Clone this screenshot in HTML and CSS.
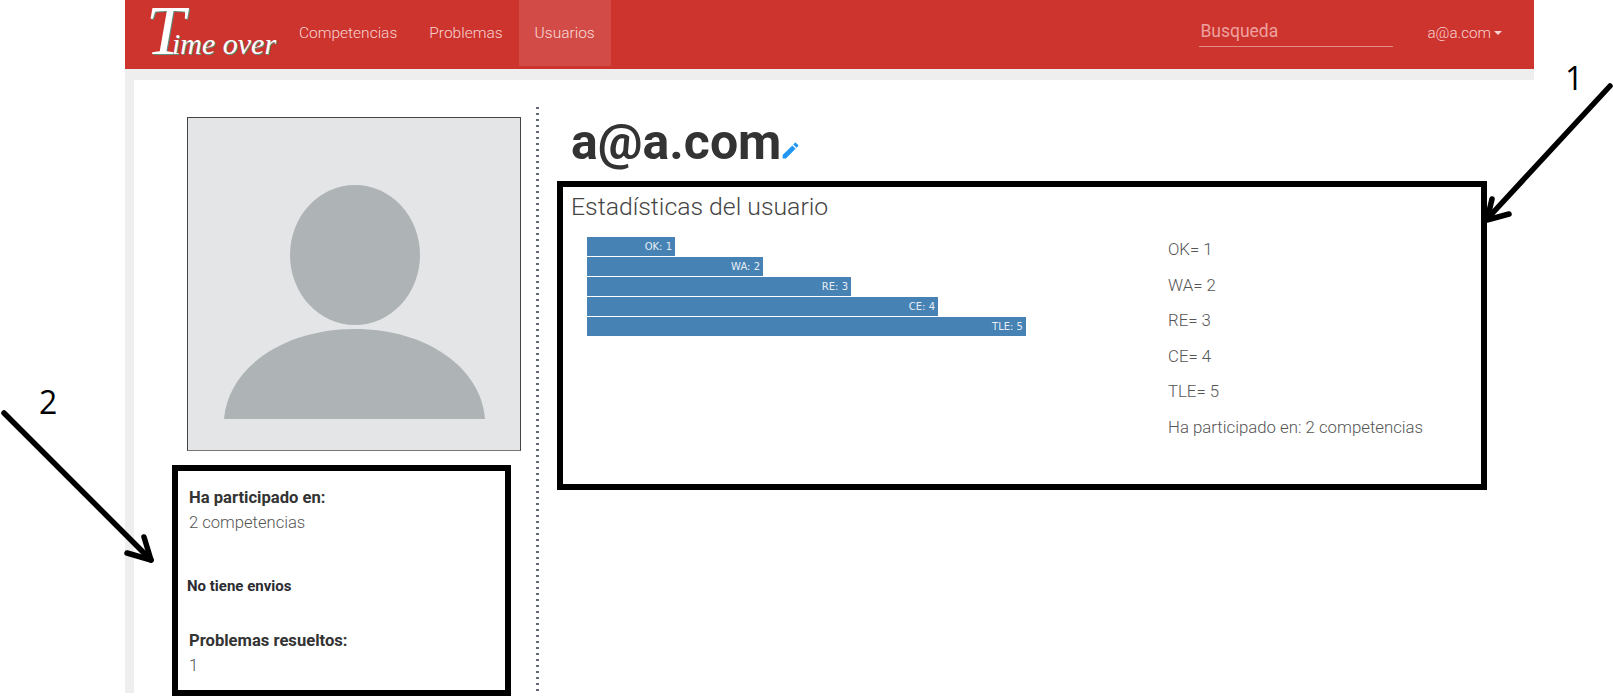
FILE: index.html
```html
<!DOCTYPE html>
<html lang="es">
<head>
    <meta charset="UTF-8">
    <meta name="viewport" content="width=device-width, initial-scale=1.0">
    <title>Time over - Usuario</title>
    <link rel="stylesheet" href="styles.css">
</head>
<body>

<div class="shell">
    <header class="navbar">
        <div class="brand"><a class="brand-text">Time over</a></div>
        <nav class="nav-links">
            <a>Competencias</a>
            <a>Problemas</a>
            <a class="active">Usuarios</a>
        </nav>
        <div class="search">Busqueda</div>
        <a class="user-menu">a@a.com<span class="caret"></span></a>
    </header>

    <main class="page">
        <div class="panel">
            <aside class="side">
                <div class="photo">
                    <svg viewBox="0 0 332 332" width="332" height="332">
                        <ellipse cx="167" cy="137" rx="65" ry="70" fill="#aeb3b6"/>
                        <path d="M36 301 C40 250 95 211 167 211 C239 211 293 250 297 301 Z" fill="#aeb3b6"/>
                    </svg>
                </div>
                <div class="summary">
                    <div class="summary-group">
                        <strong>Ha participado en:</strong>
                        <span>2 competencias</span>
                    </div>
                    <div class="no-envios">No tiene envios</div>
                    <div class="summary-group">
                        <strong>Problemas resueltos:</strong>
                        <span>1</span>
                    </div>
                </div>
            </aside>

            <section class="content">
                <h1 class="user-title">a@a.com<svg class="edit-icon" viewBox="0 0 24 24" width="21" height="21"><path d="M3 17.25V21h3.75L17.81 9.94l-3.75-3.75L3 17.25zM20.71 7.04c.39-.39.39-1.02 0-1.41l-2.34-2.34c-.39-.39-1.02-.39-1.41 0l-1.83 1.83 3.75 3.75 1.83-1.83z"/></svg></h1>

                <div class="stats">
                    <h2>Estadísticas del usuario</h2>
                    <div class="stats-body">
                        <div class="chart">
                            <div class="bar" style="width: 88px">OK: 1</div>
                            <div class="bar" style="width: 176px">WA: 2</div>
                            <div class="bar" style="width: 264px">RE: 3</div>
                            <div class="bar" style="width: 351px">CE: 4</div>
                            <div class="bar" style="width: 439px">TLE: 5</div>
                        </div>
                        <ul class="stats-list">
                            <li>OK= 1</li>
                            <li>WA= 2</li>
                            <li>RE= 3</li>
                            <li>CE= 4</li>
                            <li>TLE= 5</li>
                            <li>Ha participado en: 2 competencias</li>
                        </ul>
                    </div>
                </div>
            </section>
        </div>
    </main>
</div>

<!-- Annotations drawn over the screenshot -->
<span class="mark mark-1">1</span>
<span class="mark mark-2">2</span>
<svg class="arrows" width="1613" height="696" viewBox="0 0 1613 696">
    <g fill="none" stroke="#000" stroke-width="5.5" stroke-linecap="round" stroke-linejoin="round">
        <path d="M1610 86 L1488 218"/>
        <path d="M1492 199 L1487 220 L1509 214"/>
        <path d="M4 413 L151 560"/>
        <path d="M144 537 L151 560 L127 553"/>
    </g>
</svg>

</body>
</html>
```

FILE: styles.css
```css
html, body {
    margin: 0;
    height: 696px;
    overflow: hidden;
    background: #fff;
}
body {
    position: relative;
    font-family: Roboto, "Liberation Sans", sans-serif;
    color: #555;
}
.shell {
    width: 1409px;
    height: 693px;
    margin-left: 125px;
    display: flex;
    flex-direction: column;
}

/* navbar */
.navbar {
    height: 69px;
    flex: none;
    background: #cd342e;
    display: flex;
    align-items: flex-start;
}
.brand {
    width: 158px;
    height: 66px;
    flex: none;
    padding-left: 21px;
    box-sizing: border-box;
}
.brand-text {
    display: inline-block;
    line-height: 62px;
    color: #fff;
    font-family: "Liberation Serif", serif;
    font-style: italic;
    font-size: 30px;
    white-space: nowrap;
    text-shadow: 1px 1px 0 #5f8f80;
}
.brand-text::first-letter {
    font-size: 70px;
    margin-right: -13px;
}
.nav-links {
    display: flex;
}
.nav-links a {
    height: 66px;
    line-height: 66px;
    padding: 0 16px;
    font-size: 15.5px;
    font-weight: 300;
    color: #f8d3d1;
}
.nav-links a.active {
    background: #d34b46;
    color: #f8dddc;
}
.search {
    margin-left: auto;
    width: 194px;
    height: 47px;
    box-sizing: border-box;
    padding: 21px 0 0 1px;
    line-height: 20px;
    font-size: 17.5px;
    color: #eda19e;
    border-bottom: 1px solid #e28d89;
}
.user-menu {
    margin: 0 32px 0 34px;
    line-height: 66px;
    font-size: 15.2px;
    font-weight: 300;
    color: #f8d3d1;
    display: flex;
    align-items: center;
}
.caret {
    margin-left: 3px;
    border-left: 4px solid transparent;
    border-right: 4px solid transparent;
    border-top: 4px solid #f8d3d1;
}

/* page */
.page {
    flex: 1;
    background: #eee;
    padding: 11px 0 0 9px;
    min-height: 0;
}
.panel {
    height: 100%;
    background: #fff;
    padding-top: 25px;
    box-sizing: border-box;
    display: flex;
}
.side {
    width: 405px;
    flex: none;
    padding-top: 12px;
    box-sizing: border-box;
    background: radial-gradient(circle, #5f6673 1.1px, transparent 1.5px) right top / 3px 6px repeat-y;
}
.photo {
    width: 332px;
    height: 332px;
    margin-left: 53px;
    background: #e4e5e7;
    border: 1px solid #444;
    border-bottom-color: #777;
}
.photo svg {
    display: block;
}
.summary {
    width: 339px;
    height: 231px;
    margin: 14px 0 0 38px;
    border: 6px solid #000;
    box-sizing: border-box;
    padding: 14px 0 0 9px;
}
.summary-group {
    margin-left: 2px;
    display: flex;
    flex-direction: column;
    line-height: 25px;
    font-size: 16.6px;
    font-weight: 300;
}
.summary-group strong {
    font-weight: 700;
    color: #333;
}
.no-envios {
    margin: 41px 0 32px;
    font-size: 15px;
    line-height: 20px;
    font-weight: 700;
    color: #2c2c33;
}

.content {
    flex: 1;
    padding-left: 18px;
}
.user-title {
    margin: 0 0 0 14px;
    height: 76px;
    font-size: 50px;
    font-weight: 700;
    line-height: 74px;
    color: #333;
    display: flex;
    align-items: flex-start;
}
.edit-icon {
    fill: #2196f3;
    margin: 35px 0 0 -1px;
}
.stats {
    width: 930px;
    height: 309px;
    border: 6px solid #000;
    box-sizing: border-box;
    padding-left: 8px;
}
.stats h2 {
    margin: 0;
    font-size: 24.8px;
    font-weight: 300;
    line-height: 40px;
    color: #444;
}
.stats-body {
    display: flex;
    padding: 10px 0 0 16px;
}
.chart {
    width: 581px;
    display: flex;
    flex-direction: column;
    gap: 1px;
}
.bar {
    height: 19px;
    line-height: 19px;
    background: #4682b4;
    color: #e8eef4;
    font-family: "DejaVu Sans", sans-serif;
    font-size: 10px;
    text-align: right;
    padding-right: 3px;
    box-sizing: border-box;
}
.stats-list {
    list-style: none;
    margin: 0;
    padding: 0;
    font-size: 16.8px;
    font-weight: 300;
    color: #555;
}
.stats-list li {
    line-height: 24px;
    margin-bottom: 11.5px;
}

/* annotations */
.mark {
    position: absolute;
    font-family: "Open Sans", sans-serif;
    font-size: 32px;
    line-height: 32px;
    color: #000;
}
.mark-1 {
    left: 1565px;
    top: 62px;
}
.mark-2 {
    left: 39px;
    top: 386px;
}
.arrows {
    position: absolute;
    left: 0;
    top: 0;
}
```
